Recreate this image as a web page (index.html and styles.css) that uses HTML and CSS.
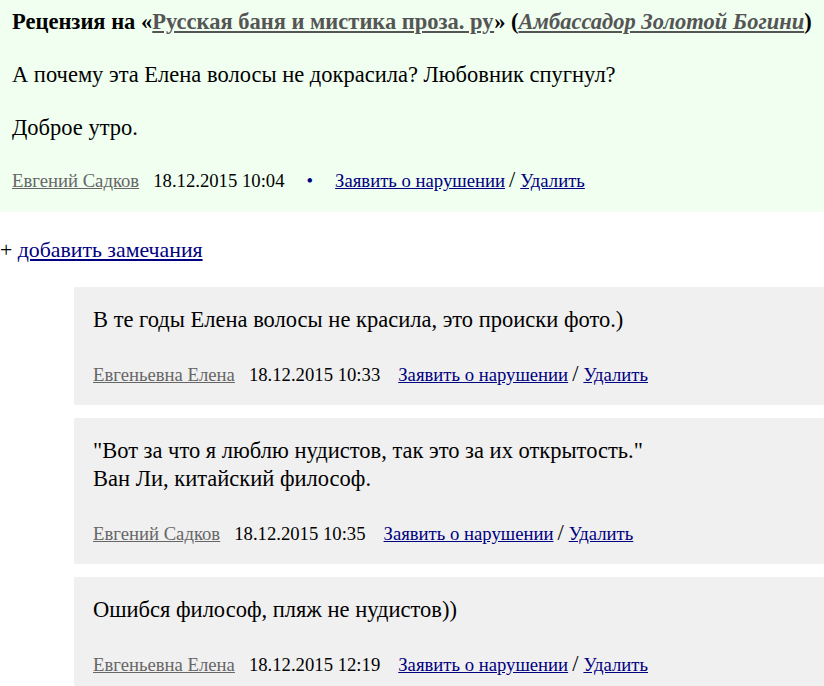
FILE: index.html
```html
<!DOCTYPE html>
<html lang="ru">

<head>
    <meta charset="UTF-8">
    <title>Рецензия</title>
    <link rel="stylesheet" href="styles.css">
</head>

<body>

    <div class="review">
        <div class="review-title">
            Рецензия на «<a class="work" href="#">Русская баня и мистика проза. ру</a>» (<a class="author-work" href="#">Амбассадор Золотой Богини</a>)
        </div>
        <p>А почему эта Елена волосы не докрасила? Любовник спугнул?</p>
        <p>Доброе утро.</p>
        <div class="meta">
            <a class="user" href="#">Евгений Садков</a>
            <span class="date">18.12.2015 10:04</span>
            <span class="dot">•</span>
            <a class="act" href="#">Заявить о нарушении</a>
            <span class="sep">/</span>
            <a class="act" href="#">Удалить</a>
        </div>
    </div>

    <div class="add">+ <a href="#">добавить замечания</a></div>

    <div class="comments">
        <div class="comment">
            <p>В те годы Елена волосы не красила, это происки фото.)</p>
            <div class="meta">
                <a class="user" href="#">Евгеньевна Елена</a>
                <span class="date">18.12.2015 10:33</span>
                <a class="act" href="#">Заявить о нарушении</a>
                <span class="sep">/</span>
                <a class="act" href="#">Удалить</a>
            </div>
        </div>

        <div class="comment">
            <p>"Вот за что я люблю нудистов, так это за их открытость."<br>Ван Ли, китайский философ.</p>
            <div class="meta">
                <a class="user" href="#">Евгений Садков</a>
                <span class="date">18.12.2015 10:35</span>
                <a class="act" href="#">Заявить о нарушении</a>
                <span class="sep">/</span>
                <a class="act" href="#">Удалить</a>
            </div>
        </div>

        <div class="comment">
            <p>Ошибся философ, пляж не нудистов))</p>
            <div class="meta">
                <a class="user" href="#">Евгеньевна Елена</a>
                <span class="date">18.12.2015 12:19</span>
                <a class="act" href="#">Заявить о нарушении</a>
                <span class="sep">/</span>
                <a class="act" href="#">Удалить</a>
            </div>
        </div>
    </div>

</body>

</html>
```

FILE: styles.css
```css
body {
    margin: 0;
    font-family: "Liberation Serif", "Times New Roman", serif;
    font-size: 22.5px;
    line-height: 28px;
    color: #000;
    background-color: #fff;
}

p {
    margin: 0 0 25px;
}

.review {
    background-color: #f0fff0;
    padding: 8px 12px 18px;
}

.review-title {
    font-weight: bold;
    margin-bottom: 25px;
}

.review-title a {
    color: #555;
}

.review-title .author-work {
    font-style: italic;
}

/* author, date and links under a text */
.meta {
    display: flex;
    align-items: baseline;
    font-size: 18.7px;
    line-height: 27px;
}

.meta .user {
    color: #666;
    margin-right: 14px;
}

.meta .date {
    margin-right: 18px;
}

.meta .dot {
    color: #000080;
    margin: 0 22px 0 4px;
}

.meta .sep {
    font-size: 22.5px;
    line-height: 18px;
    margin: 0 5px 0 4px;
}

.meta .act,
.add a {
    color: #000080;
}

.add {
    margin: 24px 0 23px;
    font-size: 21.8px;
}

.comments {
    display: flex;
    flex-direction: column;
    gap: 13px;
    margin-left: 74px;
}

.comment {
    background-color: #f0f0f0;
    padding: 19px 19px 17px;
}

.comment p {
    margin-bottom: 27px;
}
```
